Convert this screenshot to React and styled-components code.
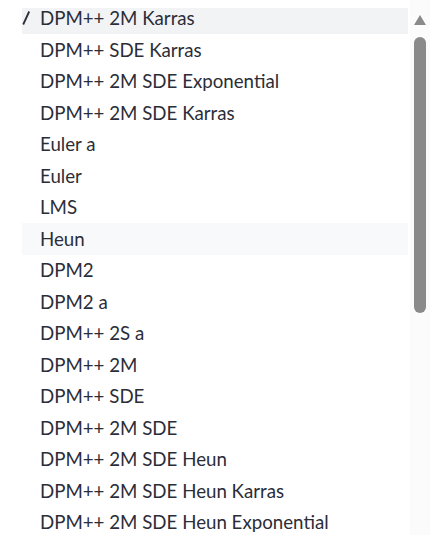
import styled, { createGlobalStyle } from "styled-components";

const GlobalStyle = createGlobalStyle`
  html, body {
    margin: 0;
    padding: 0;
    background: #ffffff;
  }
  body {
    font-family: "Lato", "Liberation Sans", sans-serif;
    overflow: hidden;
  }
`;

const Frame = styled.div`
  display: flex;
  width: 430px;
  height: 535px;
  overflow: hidden;
`;

const List = styled.ul`
  list-style: none;
  margin: 0 0 0 22px;
  padding: 2.5px 0 0;
  width: 386px;
  flex: none;
`;

const Row = styled.li`
  display: flex;
  align-items: center;
  height: 31.5px;
  font-size: 18.7px;
  color: #2b2d38;
  white-space: nowrap;
  background: ${({ $selected, $hover }) =>
    $selected
      ? "linear-gradient(to bottom, transparent 5.5px, #f2f3f5 5.5px, #f2f3f5 30.5px, transparent 30.5px)"
      : $hover
      ? "#f8f9fb"
      : "transparent"};
`;

const Check = styled.span`
  width: 18px;
  flex: none;
  display: flex;
  align-items: center;
`;

const Scrollbar = styled.div`
  width: 20px;
  margin-left: 2px;
  height: 100%;
  background: #fbfbfb;
  display: flex;
  flex-direction: column;
  align-items: center;
  padding-top: 15px;
  box-sizing: border-box;
`;

const Arrow = styled.div`
  width: 0;
  height: 0;
  border-left: 6px solid transparent;
  border-right: 6px solid transparent;
  border-bottom: 10px solid #8a8a8a;
`;

const Thumb = styled.div`
  margin-top: 12px;
  width: 12px;
  height: 276px;
  border-radius: 6px;
  background: #8a8a8a;
`;

const samplers = [
  "DPM++ 2M Karras",
  "DPM++ SDE Karras",
  "DPM++ 2M SDE Exponential",
  "DPM++ 2M SDE Karras",
  "Euler a",
  "Euler",
  "LMS",
  "Heun",
  "DPM2",
  "DPM2 a",
  "DPM++ 2S a",
  "DPM++ 2M",
  "DPM++ SDE",
  "DPM++ 2M SDE",
  "DPM++ 2M SDE Heun",
  "DPM++ 2M SDE Heun Karras",
  "DPM++ 2M SDE Heun Exponential",
];

function CheckMark() {
  return (
    <svg width="9" height="16" viewBox="0 0 9 16">
      <path d="M1.2 14.5 L7.2 1.5" stroke="#2b2d38" strokeWidth="1.8" fill="none" />
    </svg>
  );
}

export default function App() {
  return (
    <>
      <GlobalStyle />
      <Frame>
        <List>
          {samplers.map((name, i) => (
            <Row key={i} $selected={i === 0} $hover={name === "Heun"}>
              <Check>{i === 0 && <CheckMark />}</Check>
              {name}
            </Row>
          ))}
        </List>
        <Scrollbar>
          <Arrow />
          <Thumb />
        </Scrollbar>
      </Frame>
    </>
  );
}
